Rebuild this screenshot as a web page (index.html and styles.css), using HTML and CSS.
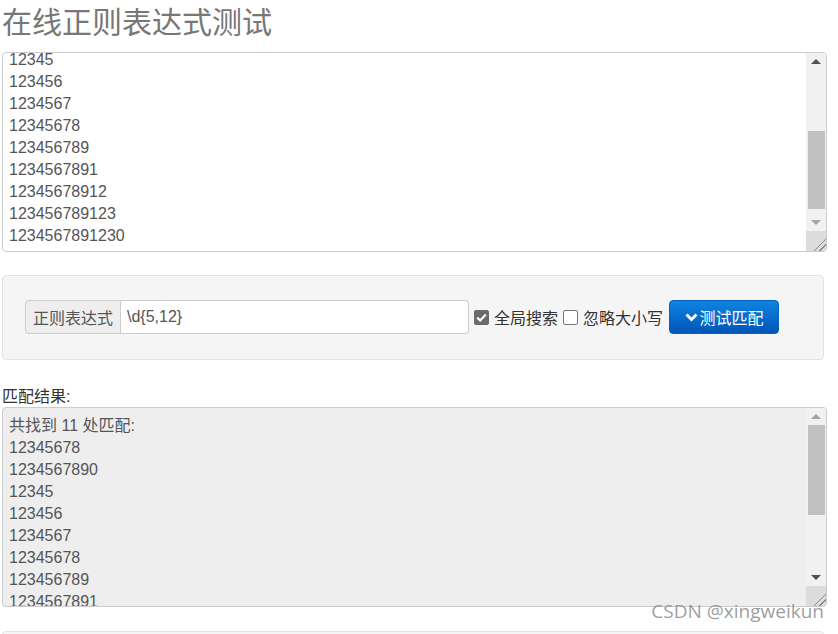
FILE: index.html
```html
<!DOCTYPE html>
<html lang="zh-CN">
<head>
    <meta charset="UTF-8">
    <title>在线正则表达式测试</title>
    <link rel="stylesheet" href="styles.css">
</head>
<body>
    <h1 class="title">在线正则表达式测试</h1>

    <div class="textbox source">
        <div class="textbox-text">
            <div class="lines lines-scrolled">
                <div>12345</div>
                <div>123456</div>
                <div>1234567</div>
                <div>12345678</div>
                <div>123456789</div>
                <div>1234567891</div>
                <div>12345678912</div>
                <div>123456789123</div>
                <div>1234567891230</div>
            </div>
        </div>
        <div class="scrollbar">
            <span class="arrow up dark"></span>
            <span class="track"><span class="thumb thumb-source"></span></span>
            <span class="arrow down"></span>
            <span class="grip"></span>
        </div>
    </div>

    <div class="well">
        <div class="input-group">
            <span class="addon">正则表达式</span>
            <span class="regex-input">\d{5,12}</span>
        </div>
        <label class="check"><span class="box checked"><svg width="11" height="9" viewBox="0 0 11 9"><path d="M1.2 4.6 L4.2 7.4 L9.8 1.4" fill="none" stroke="#fff" stroke-width="2.2"/></svg></span>全局搜索</label>
        <label class="check"><span class="box"></span>忽略大小写</label>
        <button class="btn-test"><svg width="13" height="9" viewBox="0 0 13 9"><path d="M1.5 1.5 L6.5 6.5 L11.5 1.5" fill="none" stroke="#fff" stroke-width="3"/></svg>测试匹配</button>
    </div>

    <div class="result-label">匹配结果:</div>

    <div class="textbox result">
        <div class="textbox-text">
            <div class="lines">
                <div>共找到 11 处匹配:</div>
                <div>12345678</div>
                <div>1234567890</div>
                <div>12345</div>
                <div>123456</div>
                <div>1234567</div>
                <div>12345678</div>
                <div>123456789</div>
                <div>1234567891</div>
            </div>
        </div>
        <div class="scrollbar">
            <span class="arrow up"></span>
            <span class="track"><span class="thumb thumb-result"></span></span>
            <span class="arrow down dark"></span>
            <span class="grip"></span>
        </div>
    </div>

    <div class="well well-next"></div>

    <div class="watermark">CSDN @xingweikun</div>
</body>
</html>
```

FILE: styles.css
```css
body {
    margin: 0;
    padding: 0 11px 0 2px;
    font-family: "Liberation Sans", "Noto Sans CJK SC", sans-serif;
    color: #333;
    background: #fff;
    position: relative;
    height: 634px;
    overflow: hidden;
}

.title {
    margin: 0 0 6px 0;
    font-size: 30px;
    line-height: 46px;
    font-weight: normal;
    color: #777;
}

.textbox {
    display: flex;
    height: 198px;
    border: 1px solid #ccc;
    border-radius: 4px;
    background: #fff;
    color: #555;
    font-size: 16px;
    line-height: 22px;
    overflow: hidden;
}

.textbox-text {
    flex: 1;
    padding: 0 6px;
    overflow: hidden;
}

.lines-scrolled {
    margin-top: -4px;
}

.result {
    background: #eee;
}

.result .lines {
    margin-top: 7px;
}

.scrollbar {
    width: 20px;
    display: flex;
    flex-direction: column;
    align-items: center;
    background: #f1f1f1;
}

.arrow {
    width: 0;
    height: 0;
    border-left: 5px solid transparent;
    border-right: 5px solid transparent;
    margin: 6px 0;
}

.arrow.up {
    border-bottom: 5px solid #a3a3a3;
}

.arrow.down {
    border-top: 5px solid #a3a3a3;
}

.arrow.up.dark {
    border-bottom-color: #505050;
}

.arrow.down.dark {
    border-top-color: #505050;
}

.track {
    flex: 1;
    width: 100%;
    display: flex;
    flex-direction: column;
    align-items: center;
}

.thumb {
    width: 17px;
    background: #c1c1c1;
}

.thumb-source {
    margin-top: 61px;
    height: 78px;
}

.thumb-result {
    margin-top: 0;
    height: 90px;
}

.grip {
    width: 20px;
    height: 20px;
    background: #dcdcdc linear-gradient(135deg, transparent 68%, #888 68%, #888 72%, transparent 72%, transparent 82%, #888 82%, #888 86%, transparent 86%);
}

.well {
    margin-top: 23px;
    height: 38px;
    padding: 22px 22px 23px;
    display: flex;
    align-items: center;
    background: #f5f5f5;
    border: 1px solid #e3e3e3;
    border-radius: 4px;
    font-size: 16px;
    margin-right: 3px;
}

.input-group {
    display: flex;
    height: 34px;
    width: 444px;
}

.addon {
    display: flex;
    align-items: center;
    padding: 0 7px;
    background: #eee;
    border: 1px solid #ccc;
    border-radius: 4px 0 0 4px;
    color: #555;
}

.regex-input {
    flex: 1;
    display: flex;
    align-items: center;
    padding: 0 6px;
    border: 1px solid #ccc;
    border-left: none;
    border-radius: 0 4px 4px 0;
    background: #fff;
    color: #555;
}

.check {
    display: flex;
    align-items: center;
    margin-left: 5px;
    color: #333;
}

.box {
    width: 13px;
    height: 13px;
    border: 1px solid #767676;
    border-radius: 2px;
    background: #fff;
    margin-right: 5px;
    display: flex;
    align-items: center;
    justify-content: center;
}

.box.checked {
    background: #6a6a6a;
    border-color: #6a6a6a;
}

.btn-test {
    margin-left: 6px;
    height: 34px;
    width: 110px;
    display: flex;
    align-items: center;
    justify-content: center;
    gap: 2px;
    border: 1px solid #0062c4;
    border-radius: 4px;
    background: linear-gradient(#0f83e0, #0056b8);
    color: #fff;
    font-family: "Noto Sans CJK SC", sans-serif;
    font-size: 16px;
    padding: 0;
}

.result-label {
    margin-top: 27px;
    font-size: 16px;
    line-height: 20px;
}

.well-next {
    margin-top: 24px;
    height: 10px;
    padding: 0;
}

.watermark {
    position: absolute;
    right: 14px;
    top: 598px;
    font-family: "Open Sans", sans-serif;
    font-size: 19px;
    color: rgba(140, 140, 140, 0.85);
}
```
